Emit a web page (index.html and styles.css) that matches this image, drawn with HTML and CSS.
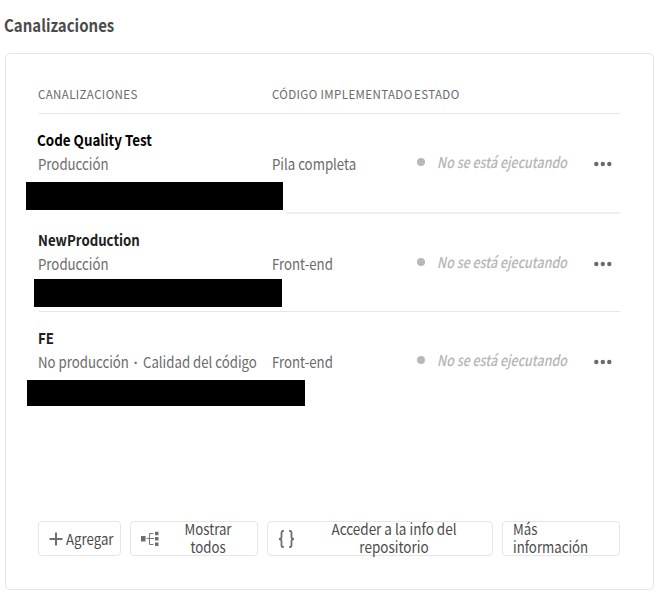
FILE: index.html
```html
<!DOCTYPE html>
<html lang="es">
<head>
<meta charset="utf-8">
<title>Canalizaciones</title>
<link rel="stylesheet" href="styles.css">
</head>
<body>
<h1><span>Canalizaciones</span></h1>
<main class="card">
  <div class="grid head"><span>CANALIZACIONES</span><span>CÓDIGO IMPLEMENTADO</span><span>ESTADO</span></div>
  <section class="grid row first">
    <div class="name"><h2><span>Code Quality Test</span></h2><p><span>Producción</span></p></div>
    <p class="code"><span>Pila completa</span></p>
    <p class="status"><i class="dot"></i><em>No se está ejecutando</em></p>
    <svg class="more" viewBox="0 0 18 6"><circle cx="2.3" cy="3" r="2.2"/><circle cx="8.8" cy="3" r="2.2"/><circle cx="15.3" cy="3" r="2.2"/></svg>
    <div class="redacted"></div>
  </section>
  <section class="grid row second">
    <div class="name"><h2><span>NewProduction</span></h2><p><span>Producción</span></p></div>
    <p class="code"><span>Front-end</span></p>
    <p class="status"><i class="dot"></i><em>No se está ejecutando</em></p>
    <svg class="more" viewBox="0 0 18 6"><circle cx="2.3" cy="3" r="2.2"/><circle cx="8.8" cy="3" r="2.2"/><circle cx="15.3" cy="3" r="2.2"/></svg>
    <div class="redacted"></div>
  </section>
  <section class="grid row third">
    <div class="name"><h2><span>FE</span></h2><p><span>No producción <b>·</b> Calidad del código</span></p></div>
    <p class="code"><span>Front-end</span></p>
    <p class="status"><i class="dot"></i><em>No se está ejecutando</em></p>
    <svg class="more" viewBox="0 0 18 6"><circle cx="2.3" cy="3" r="2.2"/><circle cx="8.8" cy="3" r="2.2"/><circle cx="15.3" cy="3" r="2.2"/></svg>
    <div class="redacted"></div>
  </section>
  <footer>
    <button class="add"><svg width="14" height="14" viewBox="0 0 14 14"><path d="M7 .5v13M.5 7h13" stroke="#6e6e6e" stroke-width="2"/></svg><span>Agregar</span></button>
    <button class="all"><svg width="18" height="16" viewBox="0 0 18 16"><path d="M0 5h4.5v5.5H0zM14 .8h3.5v3.5H14zM14 6h3.5v3.5H14zM14 11.5h3.5V15H14z" fill="#6e6e6e"/><path d="M5.5 7.5H13M12.5 2.5H8.5v11h4" fill="none" stroke="#777"/></svg><span>Mostrar<br>todos</span></button>
    <button class="repo"><svg width="17" height="18" viewBox="0 0 17 18"><path d="M5.8 1H5Q3.5 1 3.5 3V7Q3.5 9 1 9Q3.5 9 3.5 11V15Q3.5 17 5 17H5.8M11.2 1h.8Q13.5 1 13.5 3V7Q13.5 9 16 9Q13.5 9 13.5 11V15Q13.5 17 12 17h-.8" fill="none" stroke="#707070" stroke-width="1.8"/></svg><span>Acceder a la info del<br>repositorio</span></button>
    <button class="info"><span>Más<br>información</span></button>
  </footer>
</main>
</body>
</html>
```
FILE: styles.css
```css
* { box-sizing: border-box; margin: 0; padding: 0; }
body { width: 662px; height: 606px; overflow: hidden; background: #fff; padding: 14px 0 0 5px; color: #6b6b6b; font: 15px/22px "Noto Sans CJK SC", "Noto Sans", sans-serif; }
h1 { height: 39px; font-size: 17px; line-height: 22px; font-weight: 700; color: #4b4b4b; }
.card { width: 649px; height: 537px; border: 1px solid #e6e6e6; border-radius: 5px; padding: 25px 33px 0; display: flex; flex-direction: column; }
.grid { display: grid; grid-template-columns: 234px 142px 179px 27px; }
span, em { display: inline-block; white-space: nowrap; transform: scaleX(.882); transform-origin: left; margin-left: -1px; }
.head { height: 35px; border-bottom: 1px solid #e6e6e6; font-size: 12px; line-height: 29px; letter-spacing: .4px; }
.head span { transform: scaleX(.96); }
.row { position: relative; align-content: start; }
.row::after { content: ""; position: absolute; left: 0; right: 0; bottom: 0; height: 1px; background: #e6e6e6; }
.first { height: 100px; padding-top: 14px; }
.first::after { left: 247px; height: 2px; background: #eee; }
.second { height: 98px; padding-top: 14px; }
.third { height: 115px; padding-top: 14px; }
.third::after { display: none; }
h2 { font-size: 15px; line-height: 24px; font-weight: 700; color: #202020; height: 25px; }
.first h2 { color: #000; }
.first h2 span { transform: scaleX(.892); margin-left: -2px; }
b { font: 700 15px/1 "Noto Sans", sans-serif; margin: 0 3px 0 2px; }
.code { padding-top: 25px; }
.status { padding-top: 23px; display: flex; align-items: center; gap: 13px; padding-left: 2px; height: 45px; color: #b5b5b5; }
.dot { flex: none; width: 8px; height: 8px; border-radius: 50%; background: #b8b8b8; }
.status em { width: 130px; transform: scaleX(.832); font-weight: 500; }
.more { width: 18px; height: 6px; margin-top: 33px; fill: #6b6b6b; }
.redacted { position: absolute; background: #000; }
.first .redacted { left: -13px; top: 68px; width: 257px; height: 28px; }
.second .redacted { left: -5px; top: 65px; width: 248px; height: 28px; }
.third .redacted { left: -12px; top: 68px; width: 278px; height: 26px; }
footer { display: flex; gap: 9px; margin-top: auto; margin-bottom: 33px; margin-left: -1px; }
button { height: 35px; border: 1px solid #e6e6e6; border-radius: 4px; background: #fff; font: 15px/18px "Noto Sans CJK SC", "Noto Sans", sans-serif; color: #4b4b4b; display: flex; align-items: center; }
.add { width: 83px; padding-left: 10px; gap: 3px; }
.all { width: 128px; padding-left: 10px; }
.all span { width: 54px; margin-left: 22px; transform-origin: center; text-align: center; }
.repo { width: 227px; padding-left: 10px; }
.repo span { width: 140px; margin-left: 29px; transform: scaleX(.9); transform-origin: center; text-align: center; }
.info { width: 118px; padding-left: 10px; text-align: left; }
.add span, .info span { margin-left: 0; }
.all span, .repo span, .info span { margin-bottom: 2px; }
```
